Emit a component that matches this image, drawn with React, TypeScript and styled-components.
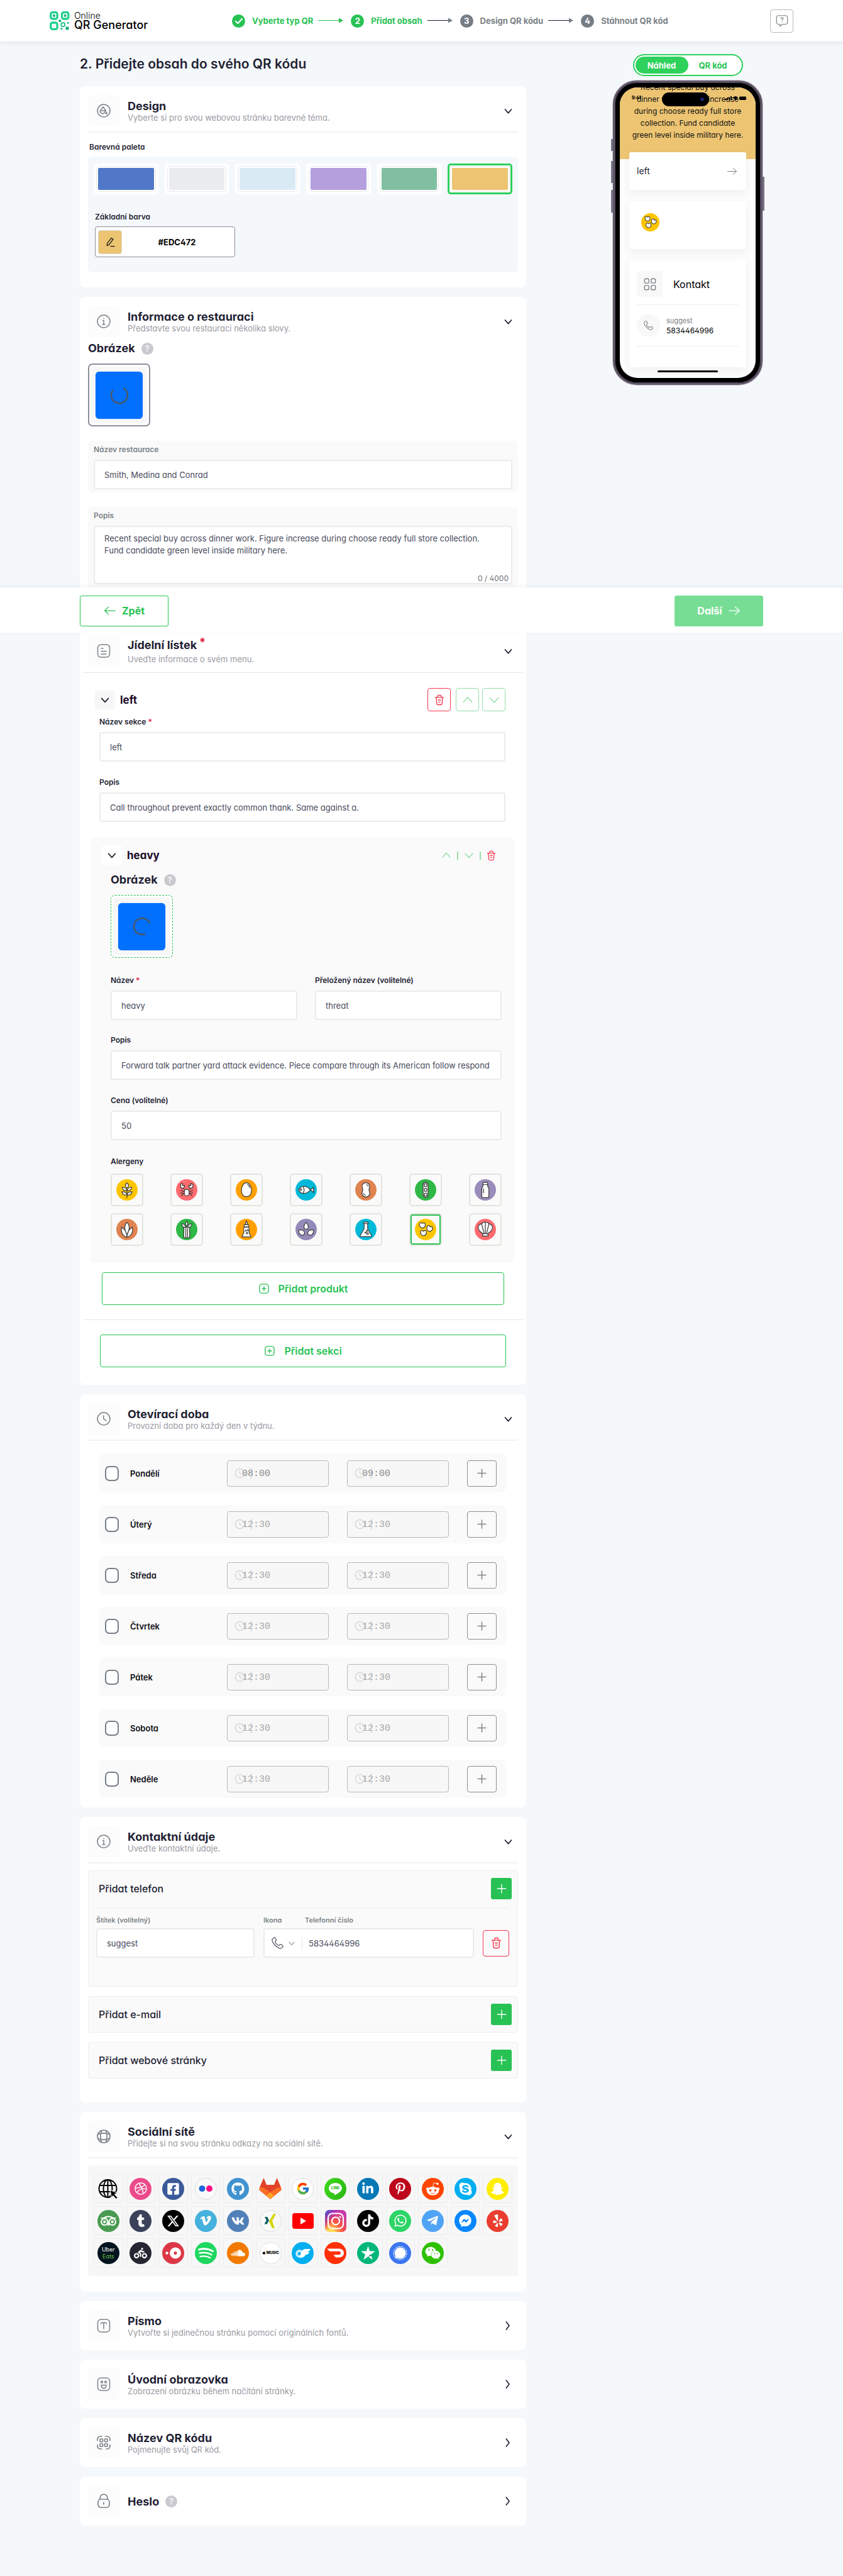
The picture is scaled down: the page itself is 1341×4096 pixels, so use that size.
import React from 'react';
import styled, { createGlobalStyle, css } from 'styled-components';
import {
  FaDribbble, FaFacebookSquare, FaGithub, FaLinkedinIn, FaPinterestP, FaRedditAlien, FaSkype,
  FaSnapchatGhost, FaTripadvisor, FaTumblr, FaVimeoV, FaVk, FaTiktok, FaWhatsapp,
  FaTelegramPlane, FaFacebookMessenger, FaYelp, FaSoundcloud, FaApple, FaWeixin, FaBiking,
} from 'react-icons/fa';
import { FaXTwitter } from 'react-icons/fa6';
import { FcGoogle } from 'react-icons/fc';

const c = {
  green: '#28c254',
  bright: '#2dd15b',
  ink: '#1f1f33',
  grey: '#7b8287',
  muted: '#9a9aa2',
  line: '#ededee',
  page: '#f4f8fb',
  soft: '#fafafa',
  red: '#f5384f',
};

const Global = createGlobalStyle`
  *, *::before, *::after { box-sizing: border-box; }
  body { margin: 0; background: ${c.page}; color: ${c.ink}; font-family: Inter, Lato, sans-serif; font-feature-settings: "cv11", "cv02"; font-size: 13px; line-height: 16px; }
  button, input, textarea { font: inherit; font-feature-settings: inherit; color: inherit; margin: 0; }
  button { cursor: pointer; padding: 0; border: 0; background: none; }
  h1, h2, h3, p { margin: 0; }
  svg { display: block; flex: none; }
`;

/* ---------- line icons ---------- */

type IconProps = { size?: number; color?: string; w?: number; children?: React.ReactNode };
const Line = ({ size = 24, color = c.grey, w = 1.5, children }: IconProps) => (
  <svg width={size} height={size} viewBox="0 0 24 24" fill="none" stroke={color} strokeWidth={w} strokeLinecap="round" strokeLinejoin="round" aria-hidden="true">
    {children}
  </svg>
);
const DownIcon = (p: IconProps) => <Line {...p}><path d="M4 8l8 9 8-9" /></Line>;
const UpIcon = (p: IconProps) => <Line {...p}><path d="M4 16l8-9 8 9" /></Line>;
const RightIcon = (p: IconProps) => <Line {...p}><path d="M8 3l7 9-7 9" /></Line>;
const PlusIcon = (p: IconProps) => <Line {...p}><path d="M12 3v18M3 12h18" /></Line>;
const ArrowRight = (p: IconProps) => <Line {...p}><path d="M2 12h20M14 5l8 7-8 7" /></Line>;
const ArrowLeft = (p: IconProps) => <Line {...p}><path d="M22 12H2M9 5l-7 7 7 7" /></Line>;
const ClockIcon = (p: IconProps) => <Line {...p}><circle cx="12" cy="12" r="10" /><path d="M11.8 7v5.2l4 2.6" /></Line>;
const InfoIcon = (p: IconProps) => <Line {...p}><circle cx="12" cy="12" r="10" /><path d="M10.5 10.5H12V17M10 17h4M12 7v.4" /></Line>;
const TrashIcon = (p: IconProps) => <Line {...p}><path d="M3 6.5h18M8.5 6V4c0-1 .5-2 1.5-2h4c1 0 1.5 1 1.5 2v2M5.5 7l.8 12.5c.1 1.5.8 2.5 2.5 2.5h6.4c1.7 0 2.4-1 2.5-2.5L18.5 7M9.5 12h5M10.5 16.5h3" /></Line>;
const PhoneIcon = (p: IconProps) => <Line {...p}><path d="M6.5 2.2c1.2 0 3.2 3.3 3.2 4.5 0 1.3-2 1.9-2 3.2 0 1.8 4.6 6.5 6.5 6.5 1.3 0 1.9-2 3.2-2 1.2 0 4.5 2.2 4.5 3.5 0 1.5-2.2 3.9-4.4 3.9C12 21.8 2.2 12 2.2 6.5c0-2.1 2.7-4.3 4.3-4.3z" /></Line>;
const GridIcon = (p: IconProps) => <Line {...p}><rect x="2.5" y="2.5" width="7.5" height="7.5" rx="2" /><rect x="14" y="2.5" width="7.5" height="7.5" rx="2" /><rect x="2.5" y="14" width="7.5" height="7.5" rx="2" /><rect x="14" y="14" width="7.5" height="7.5" rx="2" /></Line>;
const DesignIcon = () => <Line><circle cx="12" cy="12" r="10" /><path d="M11 6l-4.5 6c-.8 1.2-.5 2 .4 2.8l2.3 1.8c1 .7 2 .5 2.8-.3l3.5-4.3L11 6zM7 12h8M16.5 14.5c.8 1 1 1.7.2 2.4-.9.6-1.7-.2-1.4-1z" /></Line>;
const MenuIcon = () => <Line><rect x="2.5" y="2" width="19" height="20" rx="5" /><path d="M8 8h3M8 12.5h8M8 17h8" /></Line>;
const GlobeIcon = () => <Line w={1.7}><circle cx="12" cy="12" r="10" /><path d="M8.5 3c-2 5.5-2 12.5 0 18M15.5 3c2 5.5 2 12.5 0 18M3 8.5c5.5-2 12.5-2 18 0M3 15.5c5.5 2 12.5 2 18 0" /></Line>;
const FontIcon = () => <Line><rect x="2.5" y="2" width="19" height="20" rx="5" /><path d="M7.5 9c0-1.3.4-1.8 1.5-1.8h6c1.1 0 1.5.5 1.5 1.8M12 7.5V17" /></Line>;
const SmileIcon = () => <Line><rect x="2.5" y="2" width="19" height="20" rx="5" /><circle cx="9" cy="8.5" r="1.5" /><circle cx="15" cy="8.5" r="1.5" /><path d="M8 13.5h8c0 3-1.5 5-4 5s-4-2-4-5z" /></Line>;
const QrIcon = () => <Line w={1.7}><path d="M2 8.5V6.5C2 4 4 2 6.5 2H9M15 2h2.5C20 2 22 4 22 6.5v2M22 15.5v2c0 2.5-2 4.5-4.5 4.5H16M9 22H6.5C4 22 2 20 2 17.5v-2" /><rect x="6" y="6" width="4.5" height="4.5" rx="1" /><rect x="13.5" y="6" width="4.5" height="4.5" rx="1" /><rect x="6" y="13.5" width="4.5" height="4.5" rx="1" /><rect x="13.5" y="13.5" width="4.5" height="4.5" rx="1" /></Line>;
const LockIcon = () => <Line w={1.7}><rect x="3" y="9" width="18" height="13" rx="4.5" /><path d="M6 9V7c0-3.3 2.7-6 6-6s6 2.7 6 6v2M12 14v3" /></Line>;
const BoxPlusIcon = () => <Line size={18} color={c.green} w={1.8}><rect x="2.5" y="2.5" width="19" height="19" rx="5" /><path d="M8 12h8M12 8v8" /></Line>;
const PenIcon = () => <Line size={17} color="#111" w={1.7}><path d="M14.5 3.5l3.8 2.8-9.3 12.5-4.5 1.7.4-4.8zM13 22h8" /></Line>;
const ChatIcon = () => <Line size={22} w={1.3}><path d="M6 3h12c2 0 3.5 1.5 3.5 3.5v8c0 2-1.5 3.5-3.5 3.5h-5l-4.5 3.5V18H6c-2 0-3.5-1.5-3.5-3.5v-8C2.5 4.5 4 3 6 3z" /><path d="M10 8.3c.2-2.6 4.2-2.3 4 .1-.1 1.4-2 1.5-2 3M12 14.3v.2" /></Line>;

/* ---------- header ---------- */

const Header = styled.header`
  display: flex;
  align-items: center;
  height: 67px;
  padding: 0 79px;
  background: #fff;
  border-bottom: 1px solid #e6e6e6;
  box-shadow: 0 2px 8px rgba(0, 0, 0, 0.06);
`;
const Brand = styled.a`
  display: flex;
  align-items: center;
  gap: 7px;
  flex: 0 0 290px;
  color: #000;
  text-decoration: none;
`;
const BrandText = styled.span`
  display: flex;
  flex-direction: column;
  font-size: 18px;
  line-height: 16px;
  font-weight: 500;
`;
const BrandTop = styled.span`
  font-size: 14px;
  line-height: 14px;
  font-weight: 300;
`;
const Steps = styled.ol`
  display: flex;
  align-items: center;
  margin: 0;
  padding: 0;
  list-style: none;
`;
const Step = styled.li<{ $on?: boolean }>`
  display: flex;
  align-items: center;
  gap: 11px;
  font-size: 13px;
  font-weight: 700;
  white-space: nowrap;
  color: ${(p) => (p.$on ? c.green : c.grey)};
`;
const StepDot = styled.span<{ $on?: boolean }>`
  display: grid;
  place-items: center;
  width: 21px;
  height: 21px;
  border-radius: 50%;
  color: #fff;
  font-size: 13px;
  background: ${(p) => (p.$on ? c.green : '#757d85')};
`;
const StepArrow = styled.svg`
  margin: 0 12px 0 8px;
`;
const HelpButton = styled.button`
  display: grid;
  place-items: center;
  width: 37px;
  height: 37px;
  margin-left: auto;
  border: 1px solid #b5b8bb;
  border-radius: 4px;
`;

const Logo = () => (
  <svg width="32" height="30" viewBox="0 0 34 32" aria-hidden="true">
    <g fill="none" stroke="#1fd08a" strokeWidth="3.5">
      <rect x="1.8" y="1.8" width="11" height="11" rx="3" />
      <rect x="20.8" y="1.8" width="11" height="11" rx="3" />
      <rect x="1.8" y="19.2" width="11" height="11" rx="3" />
    </g>
    <g fill="#18b083">
      <rect x="5.3" y="5.3" width="4" height="4" rx="1" />
      <rect x="24.3" y="5.3" width="4" height="4" rx="1" />
      <rect x="15" y="14" width="4.5" height="4" rx="1.5" />
      <rect x="29.5" y="18" width="3" height="3" rx="1" />
      <rect x="27" y="26" width="5.5" height="5.5" rx="1.5" />
      <rect x="18.5" y="28" width="3" height="3" rx="1" />
    </g>
    <rect x="19.5" y="19.5" width="6" height="6" rx="2" fill="none" stroke="#1fc088" strokeWidth="2" />
  </svg>
);
const Arrow = ({ line, head }: { line: string; head: string }) => (
  <StepArrow width="40" height="10" viewBox="0 0 40 10" aria-hidden="true">
    <path d="M0 4.5h34" stroke={line} />
    <path d="M33 .5l7 4-7 4z" fill={head} />
  </StepArrow>
);

/* ---------- layout ---------- */

const Page = styled.div`
  position: relative;
  min-height: 100vh;
  padding-bottom: 80px;
`;
const Main = styled.main`
  display: flex;
  justify-content: space-between;
  align-items: flex-start;
  gap: 40px;
  max-width: 1342px;
  margin: 0 auto;
  padding: 19px 127px 0;
`;
const Content = styled.div`
  display: flex;
  flex-direction: column;
  gap: 15px;
  flex: 0 1 710px;
  min-width: 0;
`;
const PageTitle = styled.h1`
  margin-bottom: 5px;
  font-size: 21px;
  line-height: 31px;
  font-weight: 600;
`;
const Card = styled.section<{ $bottom?: number }>`
  padding: 14px 13px ${(p) => p.$bottom ?? 14}px;
  background: #fff;
  border-radius: 8px;
`;
const CardHead = styled.div<{ $rule?: boolean; $flush?: boolean }>`
  display: flex;
  align-items: center;
  gap: 13px;
  padding-right: 8px;
  ${(p) => p.$rule && css`
    padding-bottom: 8px;
    border-bottom: 2px solid #f2f2f3;
  `}
  ${(p) => p.$flush && css`
    margin: 0 -8px;
    padding: 0 16px 9px 8px;
    border-bottom: 1px solid #e8e8ea;
  `}
`;
const HeadIcon = styled.span`
  display: grid;
  place-items: center;
  flex: none;
  width: 50px;
  height: 50px;
  background: #fcfcfc;
  border-radius: 6px;
`;
const HeadText = styled.div`
  flex: 1;
  min-width: 0;
`;
const CardTitle = styled.h2`
  display: flex;
  align-items: center;
  gap: 10px;
  font-size: 18px;
  line-height: 21px;
  font-weight: 700;
`;
const CardNote = styled.p<{ $low?: boolean }>`
  padding-top: ${(p) => (p.$low ? 4 : 0)}px;
  font-size: 13px;
  line-height: 16px;
  color: ${c.muted};
`;
const Star = styled.span<{ $big?: boolean }>`
  color: #e5203c;
  ${(p) => p.$big && css`
    margin: -10px 0 0 -6px;
    font-size: 18px;
    line-height: 21px;
  `}
`;
const HelpDot = styled.button`
  display: grid;
  place-items: center;
  width: 19px;
  height: 19px;
  border-radius: 50%;
  background: #cbc9cf;
  color: #fff;
  font-size: 13px;
  font-weight: 500;
  line-height: 19px;
`;

type HeadProps = { icon: React.ReactNode; title: React.ReactNode; note?: string; closed?: boolean; rule?: boolean; flush?: boolean };
const Head = ({ icon, title, note, closed, rule, flush }: HeadProps) => (
  <CardHead $rule={rule} $flush={flush}>
    <HeadIcon>{icon}</HeadIcon>
    <HeadText>
      <CardTitle>{title}</CardTitle>
      {note && <CardNote $low={flush}>{note}</CardNote>}
    </HeadText>
    <button type="button" aria-label={closed ? 'Rozbalit' : 'Sbalit'}>
      {closed ? <RightIcon size={16} color={c.ink} w={2.5} /> : <DownIcon size={15} color={c.ink} w={2.8} />}
    </button>
  </CardHead>
);

/* ---------- design ---------- */

const Caption = styled.h3<{ $top?: number }>`
  padding: ${(p) => p.$top ?? 0}px 2px 7px;
  font-size: 12px;
  line-height: 16px;
  font-weight: 600;
`;
const PalettePanel = styled.div`
  padding: 11px 9px 24px;
  background: ${c.page};
  border-radius: 6px;
`;
const Swatches = styled.div`
  display: grid;
  grid-template-columns: repeat(6, 1fr);
  gap: 10px;
  margin-bottom: 28px;
`;
const Swatch = styled.button<{ $color: string; $on?: boolean }>`
  height: 49px;
  padding: 4px;
  background: #fff;
  border: 3px solid ${(p) => (p.$on ? c.bright : '#fff')};
  border-radius: 5px;
  &::before {
    content: '';
    display: block;
    height: 100%;
    background: ${(p) => p.$color};
    border-radius: 2px;
    box-shadow: 0 0 0 2px #fff, 0 0 0 3px #e9e9ec;
  }
`;
const ColorButton = styled.button`
  display: flex;
  align-items: center;
  width: 223px;
  height: 49px;
  margin-left: 2px;
  padding: 0 4px;
  background: #fff;
  border: 1px solid #8f8d98;
  border-radius: 4px;
  font-size: 13px;
  font-weight: 700;
  color: #000;
`;
const ColorChip = styled.span`
  display: grid;
  place-items: center;
  width: 38px;
  height: 38px;
  background: #ecc472;
  border: 1px solid #d6d6d6;
  border-radius: 4px;
`;
const ColorCode = styled.span`
  flex: 1;
  text-align: center;
`;

/* ---------- image slot ---------- */

const ImageLabel = styled.h3`
  display: flex;
  align-items: center;
  gap: 10px;
  margin-bottom: 13px;
  font-size: 18px;
  line-height: 22px;
  font-weight: 700;
`;
const ImageBlock = styled.div`
  padding-top: 7px;
`;
const ImageSlot = styled.button<{ $dashed?: boolean }>`
  display: grid;
  place-items: center;
  width: 99px;
  height: 100px;
  padding: 3px;
  border: ${(p) => (p.$dashed ? `1px dashed ${c.green}` : '2px solid #8f8d98')};
  border-radius: 7px;
  background: linear-gradient(#f7f7f7, #f7f7f7) content-box, #fff;
`;
const ImageFill = styled.span`
  display: grid;
  place-items: center;
  width: 75px;
  height: 75px;
  background: #0170ff;
  border-radius: 6px;
  box-shadow: 0 0 1px #0170ff;
`;
const Picture = ({ dashed }: { dashed?: boolean }) => (
  <ImageSlot type="button" $dashed={dashed} aria-label="Obrázek">
    <ImageFill>
      <svg width="30" height="30" viewBox="0 0 30 30" fill="none" stroke="#4b5763" strokeWidth="2.5">
        <path d={dashed ? 'M27 10A13 13 0 1 0 20.5 26.8' : 'M4.5 7.5A13 13 0 1 0 21.5 4'} />
      </svg>
    </ImageFill>
  </ImageSlot>
);

/* ---------- fields ---------- */

const FieldBox = styled.div<{ $soft?: boolean; $gap?: number }>`
  display: flex;
  flex-direction: column;
  gap: 8px;
  margin-top: ${(p) => p.$gap ?? 0}px;
  ${(p) => p.$soft && css`
    padding: 6px 9px 5px;
    background: ${c.soft};
    border-radius: 6px;
    color: ${c.grey};
  `}
`;
const Label = styled.label`
  font-size: 12px;
  line-height: 16px;
  font-weight: 600;
`;
const inputLook = css`
  width: 100%;
  background: #fff;
  border: 2px solid #ebebeb;
  border-radius: 4px;
  color: #474a5a;
  font-size: 13px;
  outline: none;
`;
const Input = styled.input`
  ${inputLook}
  height: 47px;
  padding: 0 15px;
`;
const Area = styled.textarea`
  ${inputLook}
  display: block;
  height: 93px;
  padding: 9px 24px 9px 15px;
  line-height: 19px;
  resize: none;
`;
const AreaWrap = styled.div`
  position: relative;
`;
const Counter = styled.span`
  position: absolute;
  right: 6px;
  bottom: 1px;
  color: #6f7378;
  font-size: 12px;
`;
type FieldProps = { id: string; label: string; value: string; required?: boolean; soft?: boolean; gap?: number };
const Field = ({ id, label, value, required, soft, gap }: FieldProps) => (
  <FieldBox $soft={soft} $gap={gap}>
    <Label htmlFor={id}>{label}{required && <Star> *</Star>}</Label>
    <Input id={id} defaultValue={value} />
  </FieldBox>
);

/* ---------- floating navigation ---------- */

const ActionBar = styled.nav`
  position: absolute;
  top: 934px;
  left: 0;
  right: 0;
  background: #fff;
  box-shadow: 0 -2px 8px rgba(0, 0, 0, 0.05);
`;
const ActionInner = styled.div`
  display: flex;
  justify-content: space-between;
  align-items: center;
  height: 72px;
  max-width: 1342px;
  margin: 0 auto;
  padding: 2px 127px 0;
`;
const ActionButton = styled.button<{ $solid?: boolean }>`
  display: flex;
  align-items: center;
  justify-content: center;
  gap: 9px;
  width: 141px;
  height: 49px;
  border: 1px solid ${(p) => (p.$solid ? '#77dd94' : c.green)};
  border-radius: 3px;
  background: ${(p) => (p.$solid ? '#77dd94' : '#fff')};
  color: ${(p) => (p.$solid ? '#fff' : c.green)};
  font-size: 16px;
  font-weight: 700;
`;

/* ---------- menu ---------- */

const MenuBody = styled.div`
  padding: 0 7px;
`;
const Row = styled.div<{ $gap?: number }>`
  display: flex;
  align-items: center;
  gap: ${(p) => p.$gap ?? 8}px;
`;
const SectionRow = styled(Row)`
  padding: 24px 13px 0 4px;
`;
const SectionFields = styled.div`
  padding: 9px 13px 25px 11px;
`;
const RowTitle = styled.h3`
  flex: 1;
  font-size: 17px;
  line-height: 20px;
  font-weight: 700;
  color: #1c0c28;
`;
const FoldButton = styled.button<{ $white?: boolean }>`
  display: grid;
  place-items: center;
  width: 32px;
  height: 30px;
  background: ${(p) => (p.$white ? '#fff' : '#f7f7f7')};
`;
const SquareButton = styled.button<{ $tone: 'red' | 'green' | 'grey'; $w?: number; $h?: number }>`
  display: grid;
  place-items: center;
  flex: none;
  width: ${(p) => p.$w ?? 37}px;
  height: ${(p) => p.$h ?? 37}px;
  border: 1px solid ${(p) => ({ red: c.red, green: '#95dfaa', grey: '#8e8e95' })[p.$tone]};
  border-radius: 4px;
`;
const Bar = styled.span`
  width: 2px;
  height: 13px;
  background: #95dfaa;
`;
const Product = styled.div`
  margin: 0 -1px 0 -3px;
  padding: 13px 20px 27px 18px;
  background: ${c.soft};
  border-radius: 5px;
`;
const ProductTools = styled(Row)`
  margin-right: 8px;
`;
const ProductBody = styled.div`
  padding: 13px 0 0 14px;
`;
const TwoCols = styled.div`
  display: grid;
  grid-template-columns: 1fr 1fr;
  gap: 28px;
  margin: 28px 0 0;
`;
const AllergenTitle = styled.h3`
  margin-top: 26px;
  font-size: 12px;
  line-height: 16px;
  font-weight: 600;
`;
const Allergens = styled.div`
  display: grid;
  grid-template-columns: repeat(7, 52px);
  justify-content: space-between;
  row-gap: 11px;
  margin-top: 11px;
`;
const AllergenTile = styled.button<{ $on?: boolean }>`
  display: grid;
  place-items: center;
  height: 52px;
  border: 2px solid #e4e4dd;
  border-radius: 5px;
  ${(p) => p.$on && css`
    box-shadow: inset 0 0 0 2px ${c.green};
  `}
`;
const WideButton = styled.button<{ $inset?: number }>`
  display: flex;
  align-items: center;
  justify-content: center;
  gap: 14px;
  width: calc(100% - ${(p) => (p.$inset ?? 12) * 2}px);
  height: 52px;
  margin: 15px auto 0;
  border: 1px solid ${c.green};
  border-radius: 4px;
  color: ${c.green};
  font-size: 16px;
  font-weight: 600;
`;
const Rule = styled.hr`
  height: 1px;
  margin: 23px -8px;
  border: 0;
  background: #e8e8ea;
`;

const bean = 'M-5-2c0-3 3-4 4-2.5 1 1.3 1.5 1 2.5 0C3-5.5 5-4 5-1.5 5 2 2.5 4 0 4s-5-2.5-5-6z';
const BeanArt = () => (
  <>
    <path d={bean} transform="translate(12.5 11.5)" />
    <path d={bean} transform="translate(24.5 17) rotate(20)" />
    <path d={bean} transform="translate(14.5 24.5) rotate(-5)" />
  </>
);
const allergens: { name: string; color: string; art: React.ReactNode; on?: boolean }[] = [
  { name: 'Lepek', color: '#fdc500', art: <><path d="M18 31V17" /><path d="M18 6c-3.5 3-3.5 6 0 9 3.5-3 3.5-6 0-9zM10 13.5c5 0 7 1.500 8 5.500-4 1-7.500-1-8-5.500zM26 13.500c-5 0-7 1.500-8 5.500 4 1 7.500-1 8-5.500zM9.500 21c5 0 7.500 1 8.500 5-4 1.500-8 0-8.500-5zM26.500 21c-5 0-7.500 1-8.500 5 4 1.500 8 0 8.500-5z" /></> },
  { name: 'Korýši', color: '#ff6b6f', art: <><path d="M9 28l4-4-5-1M27 28l-4-4 5-1M8 19l6 2M28 19l-6 2M14 17l-4-3M22 17l4-3" fill="none" /><rect x="14" y="17" width="8" height="11" rx="4" /><path d="M11 7c-4 0-5 7-1 8 3 .5 5-2 4.5-4.5L11 11zM25 7c4 0 5 7 1 8-3 .5-5-2-4.5-4.5L25 11z" /></> },
  { name: 'Vejce', color: '#ffa000', art: <><path d="M18 6c-5 0-8.5 7-8.5 13S13 29.5 18 29.5s8.5-4.5 8.5-10.5S23 6 18 6z" /><path d="M20 9c2 1 3 3 3.5 5" /></> },
  { name: 'Ryby', color: '#00b9d8', art: <><path d="M5 18c4-8 14-8 20 0-6 8-16 8-20 0zM25 18l6-4.5c-1 3-1 6 0 9z" /><path d="M13 12.5c2 3.5 2 7.5 0 11" /><circle cx="9" cy="17.5" r="1.5" /></> },
  { name: 'Arašídy', color: '#df8350', art: <><path d="M18 6c-5 0-7.5 4-6 8 1 2.5 1 4.5 0 7-2 4.5 1 9 6 9s8-4.5 6-9c-1-2.5-1-4.5 0-7 1.500-4-1-8-6-8z" /><path d="M19 9c2 .5 2.5 1.5 3 2.5M14 24c.5 1.5 1.5 2.5 3 3" /></> },
  { name: 'Sója', color: '#2fb847', art: <><path d="M18 5c-5 1-5 6-4 9-1 3-1 5 0 8-1 4 0 8 4 9 4-1 5-5 4-9 1-3 1-5 0-8 1-3 1-8-4-9z" /><circle cx="18" cy="10" r="2.5" /><circle cx="18" cy="18" r="2.5" /><circle cx="18" cy="26" r="2.5" /></> },
  { name: 'Mléko', color: '#9a8cba', art: <><path d="M14 9h8v3l2 3v14c0 1-1 2-2 2h-8c-1 0-2-1-2-2V15l2-3z" /><rect x="14" y="5.5" width="8" height="3.5" rx="1" /><path d="M15 16v7" /></> },
  { name: 'Kukuřice', color: '#df8350', art: <><path d="M18 6c-5 4-5 14 0 22 5-8 5-18 0-22z" /><path d="M9 14c-2 9 2 15 9 17 0-7-3-13-9-17zM27 14c2 9-2 15-9 17 0-7 3-13 9-17z" /></> },
  { name: 'Celer', color: '#2fb847', art: <><path d="M18 4c-3 3-2 6 0 9 2-3 3-6 0-9zM9.500 8c0 4 2 6.5 6.5 7 0-4-2-6.5-6.5-7zM26.5 8c0 4-2 6.5-6.5 7 0-4 2-6.5 6.5-7z" /><path d="M13 15c1 5-1 12 .5 17h9c1.5-5-.5-12 .5-17l-5-1z" /><path d="M16.5 16v15M19.5 16v15" /></> },
  { name: 'Hořčice', color: '#ffa000', art: <><path d="M16 10l1.5-6h1L20 10z" /><rect x="14" y="10" width="8" height="3.5" rx="1" /><path d="M14.5 14h7c3 4 0 6 1 9l3 7.5H10.5L13.5 23c1-3-2-5 1-9z" /><circle cx="19" cy="24" r="1.2" /><circle cx="17" cy="20" r=".8" /><circle cx="20.5" cy="19" r="1" /></> },
  { name: 'Sezam', color: '#948ab8', art: <><path d="M18 6c-5 5-5 11 0 11.5C23 17 23 11 18 6zM5.5 19c7-1.5 11 2 9.5 7-4 4-10 0-9.5-7zM30.5 19c-7-1.5-11 2-9.5 7 4 4 10 0 9.5-7z" /></> },
  { name: 'Siřičitany', color: '#00b9d8', art: <><path d="M15 7h6v10l6.5 11c.5 1 0 2-1 2h-17c-1 0-1.5-1-1-2L15 17z" /><rect x="14" y="5.5" width="8" height="2.5" rx="1" /><circle cx="21" cy="25" r="1.5" /><circle cx="17.5" cy="23" r="1" /><circle cx="20" cy="20" r="1" /></> },
  { name: 'Vlčí bob', color: '#fdc500', on: true, art: <BeanArt /> },
  { name: 'Měkkýši', color: '#ff6b6f', art: <><path d="M14 25C7 21 4 15 7 11c2-3 5-2 6-4 3-2 7-2 10 0 1 2 4 1 6 4 3 4 0 10-7 14z" /><path d="M16 25L12 9M20 25l4-16M18 25V6M14 25h8l1 4H13z" /></> },
];
const AllergenIcon = ({ color, art, size = 34 }: { color: string; art: React.ReactNode; size?: number }) => (
  <svg width={size} height={size} viewBox="0 0 36 36" aria-hidden="true">
    <circle cx="18" cy="18" r="18" fill={color} />
    <g fill="#fff" stroke="#3a3a3a" strokeWidth="1.3" strokeLinecap="round" strokeLinejoin="round">{art}</g>
  </svg>
);

/* ---------- opening hours ---------- */

const Days = styled.div`
  display: flex;
  flex-direction: column;
  gap: 20px;
  padding: 21px 19px 0 18px;
`;
const Day = styled.div`
  display: flex;
  align-items: center;
  height: 61px;
  padding: 0 15px 0 9px;
  background: ${c.soft};
  border-radius: 8px;
`;
const DayLabel = styled.label`
  display: flex;
  align-items: center;
  flex: 1;
  gap: 18px;
  font-size: 13px;
  font-weight: 600;
  color: #0c0c14;
`;
const Check = styled.input`
  appearance: none;
  width: 22px;
  height: 24px;
  margin: 0;
  border: 2px solid #767e87;
  border-radius: 7px;
  background: #fff;
`;
const TimeField = styled.span`
  position: relative;
  width: 162px;
  margin-right: 29px;
`;
const TimeInput = styled.input<{ $set?: boolean }>`
  width: 100%;
  height: 42px;
  padding: 2px 10px 0 23px;
  background: #f7f7f7;
  border: 1px solid #b9b9bb;
  border-radius: 4px;
  color: ${(p) => (p.$set ? '#8b8b8b' : '#a8a8a8')};
  font-family: "Liberation Mono", monospace;
  font-size: 15px;
`;
const TimeIcon = styled.span`
  position: absolute;
  top: 12px;
  left: 12px;
  display: flex;
  padding-right: 9px;
  border-right: 1px solid #c9cbcd;
`;
const Time = ({ label, value, set }: { label: string; value: string; set?: boolean }) => (
  <TimeField>
    <TimeInput aria-label={label} defaultValue={value} $set={set} />
    <TimeIcon><ClockIcon size={17} color="#c9cbcd" /></TimeIcon>
  </TimeField>
);

/* ---------- contacts ---------- */

const Panels = styled.div`
  display: flex;
  flex-direction: column;
  gap: 15px;
  padding-top: 11px;
`;
const Panel = styled.div`
  border: 1px solid ${c.line};
  border-radius: 4px;
  background: ${c.soft};
`;
const PanelHead = styled.div`
  display: flex;
  align-items: center;
  justify-content: space-between;
  height: 56px;
  padding: 0 9px 0 16px;
  font-size: 16px;
  font-weight: 500;
`;
const AddButton = styled.button`
  display: grid;
  place-items: center;
  width: 33px;
  height: 34px;
  background: ${c.green};
  border-radius: 3px;
`;
const PhoneForm = styled.div`
  display: grid;
  grid-template-columns: 252px 1fr 42px;
  align-items: center;
  column-gap: 14px;
  row-gap: 5px;
  margin: 2px 13px 0 12px;
  padding: 11px 0 45px;
  border-top: 1px solid ${c.line};
`;
const SmallLabel = styled.label`
  font-size: 11px;
  line-height: 16px;
  font-weight: 600;
  color: ${c.grey};
`;
const SplitLabels = styled.div`
  display: grid;
  grid-template-columns: 66px 1fr;
  grid-column: 2 / 4;
`;
const PhoneBox = styled.div`
  ${inputLook}
  display: flex;
  align-items: center;
  height: 47px;
  padding: 0 10px;
`;
const IconPick = styled.button`
  display: flex;
  align-items: center;
  gap: 6px;
  height: 20px;
  padding-right: 10px;
  margin-right: 10px;
  border-right: 1px solid #e2e2e2;
`;
const PhoneInput = styled.input`
  flex: 1;
  min-width: 0;
  padding: 0;
  border: 0;
  outline: 0;
  color: #474a5a;
`;

/* ---------- social ---------- */

const SocialPanel = styled.div`
  display: grid;
  grid-template-columns: repeat(13, 1fr);
  gap: 5px;
  margin-top: 11px;
  padding: 14px 9px;
  background: #f7f7f7;
  border-radius: 5px;
`;
const SocialTile = styled.button`
  display: grid;
  place-items: center;
  height: 46px;
  border: 1px solid #ededed;
  border-radius: 4px;
`;
const Badge = styled.span<{ $bg: string; $ring?: boolean }>`
  display: flex;
  flex-direction: column;
  align-items: center;
  justify-content: center;
  width: 35px;
  height: 35px;
  border-radius: 50%;
  background: ${(p) => p.$bg};
  border: ${(p) => (p.$ring ? '1px solid #dcdcdc' : '0')};
  color: #fff;
`;
const UberText = styled.span<{ $green?: boolean }>`
  font-size: 9px;
  line-height: 11px;
  color: ${(p) => (p.$green ? '#69bf3f' : '#fff')};
`;
const MusicText = styled.span`
  display: flex;
  align-items: center;
  gap: 1px;
  color: #000;
  font-size: 6px;
  line-height: 8px;
  font-weight: 800;
`;
const LineText = styled.span`
  position: absolute;
  font-size: 6px;
  line-height: 8px;
  font-weight: 800;
  color: #2cbf13;
  padding-bottom: 2px;
`;

const WebArt = () => (
  <svg width="32" height="33" viewBox="0 0 32 33" fill="none" stroke="#000" strokeWidth="2">
    <circle cx="15.5" cy="16" r="14" />
    <ellipse cx="15.5" cy="16" rx="7" ry="14" />
    <path d="M15.5 2v28M3 11h25M3 21h25" />
    <path d="M19 18l12 5-4.5 2 5 5.5-2.5 2.5-5.5-5.5-2 4z" fill="#000" stroke="#f7f7f7" strokeWidth="1.2" />
  </svg>
);
const GitlabArt = () => (
  <svg width="36" height="34" viewBox="0 0 36 34">
    <path d="M7.5 0L12 11h12l4.5-11L35 15 18 34 1 15z" fill="#e24329" />
    <path d="M1 15l-1 4 18 15 6-7L7 15.500zM35 15l1 4-18 15-6-7 17-11.500z" fill="#fc6d26" />
    <path d="M18 23l-6 4.500 6 6.500 6-6.500z" fill="#fca326" />
  </svg>
);
const YoutubeArt = () => (
  <svg width="34" height="25" viewBox="0 0 34 25"><rect width="34" height="25" rx="4" fill="#f00" /><path d="M13 7l9 5.5-9 5.5z" fill="#fff" /></svg>
);
const InstagramArt = () => (
  <svg width="34" height="35" viewBox="0 0 34 35">
    <defs>
      <radialGradient id="ig" cx=".27" cy="1.05" r="1.05"><stop offset="0" stopColor="#fd5" /><stop offset=".15" stopColor="#fd5" /><stop offset=".5" stopColor="#ff543e" /><stop offset="1" stopColor="#c837ab" /></radialGradient>
      <linearGradient id="ig2" x1="0" y1="0" x2=".45" y2=".35"><stop offset="0" stopColor="#3771c8" /><stop offset="1" stopColor="#60f" stopOpacity="0" /></linearGradient>
    </defs>
    <rect width="34" height="35" rx="7" fill="url(#ig)" /><rect width="34" height="35" rx="7" fill="url(#ig2)" />
    <g fill="none" stroke="#fff" strokeWidth="2.2"><rect x="5" y="5.5" width="24" height="24" rx="7" /><circle cx="17" cy="17.5" r="6" /></g>
    <circle cx="24" cy="11" r="1.5" fill="#fff" />
  </svg>
);
const Art = ({ children }: { children: React.ReactNode }) => (
  <svg width="35" height="35" viewBox="0 0 35 35">{children}</svg>
);

const socials: [string, string | null, React.ReactNode, boolean?][] = [
  ['Web', null, <WebArt />],
  ['Dribbble', '#ec4b8b', <FaDribbble size={20} />],
  ['Facebook', '#3b5a99', <FaFacebookSquare size={21} />],
  ['Flickr', '#f9f9f9', <Art><circle cx="11.5" cy="17" r="5" fill="#1d66dc" /><circle cx="23" cy="17" r="5" fill="#ff0a84" /></Art>, true],
  ['GitHub', '#4093d0', <FaGithub size={21} />],
  ['GitLab', null, <GitlabArt />],
  ['Google', '#fff', <FcGoogle size={22} />, true],
  ['LINE', 'linear-gradient(120deg, #3ddb1e, #2bb511)', <><Art><path d="M17.5 8c-6 0-10.5 3.7-10.5 8.5 0 4 3.5 7.3 8.5 8 1 .2.5 1.5.5 3 4-2 12-6 12-11C28 11.7 23.5 8 17.5 8z" fill="#fff" /></Art><LineText>LINE</LineText></>],
  ['LinkedIn', '#0578b6', <FaLinkedinIn size={20} />],
  ['Pinterest', '#bd081b', <FaPinterestP size={20} />],
  ['Reddit', '#ff4500', <FaRedditAlien size={23} />],
  ['Skype', '#00aff0', <FaSkype size={23} />],
  ['Snapchat', '#ffee00', <FaSnapchatGhost size={21} />],
  ['Tripadvisor', '#4a9b52', <FaTripadvisor size={25} />],
  ['Tumblr', '#3b4159', <FaTumblr size={20} />],
  ['X', '#000', <FaXTwitter size={21} />],
  ['Vimeo', '#45b1dc', <FaVimeoV size={20} />],
  ['VK', '#5180b8', <FaVk size={21} />],
  ['Xing', '#f9f9f9', <Art><path d="M8 11h4l3 5.5-3.5 6H7.5l3.5-6z" fill="#005a5f" /><path d="M22 6h4l-6 11.5L24 29h-4l-5-11z" fill="#d4d600" /></Art>, true],
  ['YouTube', null, <YoutubeArt />],
  ['Instagram', null, <InstagramArt />],
  ['TikTok', '#000', <FaTiktok size={20} />],
  ['WhatsApp', '#2cd566', <FaWhatsapp size={22} />],
  ['Telegram', '#50a4f5', <FaTelegramPlane size={20} />],
  ['Messenger', '#0a86ff', <FaFacebookMessenger size={20} />],
  ['Yelp', '#ea3d2f', <FaYelp size={20} />],
  ['Uber Eats', '#03141f', <><UberText>Uber</UberText><UberText $green>Eats</UberText></>],
  ['Postmates', '#242731', <FaBiking size={21} />],
  ['OpenTable', '#dc3746', <Art><circle cx="21" cy="17.5" r="9" fill="#fff" /><circle cx="21" cy="17.5" r="2.5" fill="#dc3746" /><circle cx="7.5" cy="17.5" r="2.2" fill="#fff" /></Art>],
  ['Spotify', '#1ed75f', <Art><g fill="none" stroke="#fff" strokeLinecap="round"><path d="M6.5 12c7-2 15-1.2 22 2.5" strokeWidth="3" /><path d="M7.5 17.5c6.5-1.5 13-.8 19 2.5" strokeWidth="2.5" /><path d="M8.5 23c5.5-1.2 11-.5 16 2" strokeWidth="2.2" /></g></Art>],
  ['SoundCloud', '#f27a00', <FaSoundcloud size={23} />],
  ['Apple Music', '#fff', <MusicText><FaApple size={6} />MUSIC</MusicText>, true],
  ['OnlyFans', '#00aff0', <Art><circle cx="12.5" cy="18.5" r="4.5" fill="none" stroke="#bfebfc" strokeWidth="3.8" /><path d="M13 25c1-8 3-14 10-14h7c-1 3-3 4-6 4.5l4 .2c-1 3-3 4.3-6 4.5-1.5 3-4.5 5-9 4.8z" fill="#fff" /></Art>],
  ['DoorDash', '#ff3008', <Art><path d="M4 10.5h19c5 0 8 3 8 7s-3 7-8 7h-5l-3.5-4.2H23c1.5 0 3-1 3-2.8s-1.5-2.8-3-2.8H8.5z" fill="#fff" /></Art>],
  ['Trustpilot', '#03b67a', <Art><path d="M17.5 6l2.7 8.5H29l-7 5.2 2.7 8.5-7.2-5.2-7.2 5.2 2.7-8.5-7-5.2h8.8z" fill="#fff" /><path d="M22 19.7l.8 2.3-5.3 1z" fill="#046b48" /></Art>],
  ['Signal', '#3b76f0', <Art><path d="M17.5 8.5a9 9 0 1 1-4.5 16.8L9.5 26l.8-3.500a9 9 0 0 1 7.200-14z" fill="#fff" /><circle cx="17.5" cy="17.5" r="10.5" fill="none" stroke="#fff" strokeWidth="1" strokeDasharray="4 1" /></Art>],
  ['WeChat', '#2dc100', <FaWeixin size={25} />],
];

/* ---------- phone preview ---------- */

const Preview = styled.aside`
  display: flex;
  flex-direction: column;
  align-items: center;
  gap: 7px;
  flex: 0 0 240px;
`;
const Toggle = styled.div`
  display: grid;
  grid-template-columns: 84px 79px;
  height: 35px;
  width: 175px;
  padding: 2px;
  border: 2px solid ${c.bright};
  border-radius: 18px;
  background: #fff;
`;
const ToggleButton = styled.button<{ $on?: boolean }>`
  border-radius: 14px;
  background: ${(p) => (p.$on ? c.bright : 'transparent')};
  color: ${(p) => (p.$on ? '#fff' : c.green)};
  font-size: 13px;
  font-weight: 700;
`;
const Phone = styled.div`
  position: relative;
  width: 238px;
  height: 484px;
  padding: 8px;
  border: 3px solid #61586a;
  border-radius: 38px;
  background: #000;
  box-shadow: inset 0 0 0 1px #4c4455, 0 0 0 1px #cfccd3;
`;
const SideKey = styled.span<{ $side: 'left' | 'right'; $top: number; $h: number }>`
  position: absolute;
  ${(p) => p.$side}: -6px;
  top: ${(p) => p.$top}px;
  width: 3px;
  height: ${(p) => p.$h}px;
  background: #7a7186;
`;
const Screen = styled.div`
  position: relative;
  height: 100%;
  overflow: hidden;
  background: #fcfcfc;
  border-radius: 28px;
`;
const Hero = styled.div`
  display: flex;
  align-items: flex-end;
  height: 114px;
  padding: 0 16px 29px;
  background: #ecc472;
  color: #111;
  font-size: 12px;
  line-height: 19px;
  text-align: center;
`;
const Island = styled.span`
  position: absolute;
  top: 8px;
  left: 67px;
  width: 75px;
  height: 22px;
  border-radius: 11px;
  background: radial-gradient(circle at 64px 11px, #1d2a80 0 2px, #050510 3px, #000 5px);
`;
const Status = styled.div`
  position: absolute;
  top: 9px;
  left: 19px;
  right: 15px;
  display: flex;
  justify-content: space-between;
  align-items: center;
  font-size: 7px;
  font-weight: 800;
  color: #000;
`;
const PhoneCards = styled.div`
  display: flex;
  flex-direction: column;
  gap: 18px;
  margin: -11px 15px 0;
`;
const PhoneCard = styled.div<{ $pad: string; $h: number }>`
  position: relative;
  height: ${(p) => p.$h}px;
  padding: ${(p) => p.$pad};
  background: #fff;
  border-radius: 3px;
  box-shadow: 0 5px 14px rgba(0, 0, 0, 0.05);
`;
const PhoneLink = styled.a`
  display: flex;
  align-items: center;
  justify-content: space-between;
  height: 100%;
  color: ${c.ink};
  text-decoration: none;
  font-size: 14px;
`;
const ContactHead = styled.div`
  display: flex;
  align-items: center;
  gap: 17px;
  padding-bottom: 12px;
  border-bottom: 1px solid #ededee;
  font-size: 16px;
  color: #000;
`;
const ContactRow = styled.div`
  display: flex;
  align-items: center;
  gap: 10px;
  padding: 14px 0;
  border-bottom: 1px solid #ededee;
  font-size: 12px;
  line-height: 16px;
  color: #000;
`;
const IconPlate = styled.span<{ $round?: boolean }>`
  display: grid;
  place-items: center;
  width: ${(p) => (p.$round ? 37 : 41)}px;
  height: ${(p) => (p.$round ? 37 : 41)}px;
  background: #f8f8f8;
  border-radius: ${(p) => (p.$round ? '50%' : '4px')};
`;
const ContactText = styled.span`
  display: flex;
  flex-direction: column;
`;
const ContactTag = styled.span`
  font-size: 11px;
  color: ${c.grey};
`;
const HomeBar = styled.span`
  position: absolute;
  left: 60px;
  right: 60px;
  bottom: 9px;
  height: 3px;
  border-radius: 2px;
  background: #000;
`;

const palette = ['#5178c8', '#ebecf0', '#daeaf5', '#b59fdd', '#80c0a0', '#ecc472'];
const days = ['Pondělí', 'Úterý', 'Středa', 'Čtvrtek', 'Pátek', 'Sobota', 'Neděle'];

export default function App() {
  return (
    <Page>
      <Global />
      <Header>
        <Brand href="#" aria-label="Online QR Generator">
          <Logo />
          <BrandText><BrandTop>Online</BrandTop>QR Generator</BrandText>
        </Brand>
        <Steps>
          <Step $on>
            <StepDot $on>
              <svg width="14" height="11" viewBox="0 0 14 11" fill="none" stroke="#fff" strokeWidth="2.2" strokeLinecap="round" strokeLinejoin="round"><path d="M2 6l3.5 3L12 2" /></svg>
            </StepDot>
            Vyberte typ QR
          </Step>
          <Arrow line={c.green} head={c.green} />
          <Step $on><StepDot $on>2</StepDot>Přidat obsah</Step>
          <Arrow line={c.ink} head="#757d85" />
          <Step><StepDot>3</StepDot>Design QR kódu</Step>
          <Arrow line={c.ink} head="#757d85" />
          <Step><StepDot>4</StepDot>Stáhnout QR kód</Step>
        </Steps>
        <HelpButton type="button" aria-label="Nápověda"><ChatIcon /></HelpButton>
      </Header>

      <Main>
        <Content>
          <PageTitle>2. Přidejte obsah do svého QR kódu</PageTitle>

          <Card $bottom={24}>
            <Head rule icon={<DesignIcon />} title="Design" note="Vyberte si pro svou webovou stránku barevné téma." />
            <Caption $top={15}>Barevná paleta</Caption>
            <PalettePanel>
              <Swatches>
                {palette.map((p, i) => <Swatch key={p} type="button" $color={p} $on={i === 5} aria-label={p} />)}
              </Swatches>
              <Caption>Základní barva</Caption>
              <ColorButton type="button"><ColorChip><PenIcon /></ColorChip><ColorCode>#EDC472</ColorCode></ColorButton>
            </PalettePanel>
          </Card>

          <Card $bottom={47}>
            <Head icon={<InfoIcon />} title="Informace o restauraci" note="Představte svou restauraci několika slovy." />
            <ImageBlock>
              <ImageLabel>Obrázek <HelpDot type="button">?</HelpDot></ImageLabel>
              <Picture />
            </ImageBlock>
            <Field id="restaurant" label="Název restaurace" value="Smith, Medina and Conrad" soft gap={23} />
            <FieldBox $soft $gap={23}>
              <Label htmlFor="about">Popis</Label>
              <AreaWrap>
                <Area id="about" defaultValue="Recent special buy across dinner work. Figure increase during choose ready full store collection. Fund candidate green level inside military here." />
                <Counter>0 / 4000</Counter>
              </AreaWrap>
            </FieldBox>
          </Card>

          <Card $bottom={28}>
            <Head flush icon={<MenuIcon />} title={<>Jídelní lístek<Star $big>*</Star></>} note="Uveďte informace o svém menu." />
            <MenuBody>
              <SectionRow>
                <FoldButton type="button" aria-label="Sbalit sekci"><DownIcon size={16} color={c.ink} w={2.5} /></FoldButton>
                <RowTitle>left</RowTitle>
                <SquareButton type="button" $tone="red" aria-label="Smazat sekci"><TrashIcon size={18} color={c.red} w={1.8} /></SquareButton>
                <Row $gap={5}>
                  <SquareButton type="button" $tone="green" aria-label="Nahoru"><UpIcon size={20} color="#95dfaa" w={1.8} /></SquareButton>
                  <SquareButton type="button" $tone="green" aria-label="Dolů"><DownIcon size={20} color="#95dfaa" w={1.8} /></SquareButton>
                </Row>
              </SectionRow>
              <SectionFields>
                <Field id="section-name" label="Název sekce" value="left" required />
                <Field id="section-note" label="Popis" value="Call throughout prevent exactly common thank. Same against a." gap={25} />
              </SectionFields>
              <Product>
                <Row>
                  <FoldButton type="button" $white aria-label="Sbalit produkt"><DownIcon size={16} color={c.ink} w={2.5} /></FoldButton>
                  <RowTitle>heavy</RowTitle>
                  <ProductTools>
                    <button type="button" aria-label="Nahoru"><UpIcon size={18} color="#95dfaa" w={1.8} /></button>
                    <Bar />
                    <button type="button" aria-label="Dolů"><DownIcon size={18} color="#95dfaa" w={1.8} /></button>
                    <Bar />
                    <button type="button" aria-label="Smazat produkt"><TrashIcon size={17} color={c.red} w={1.8} /></button>
                  </ProductTools>
                </Row>
                <ProductBody>
                  <ImageLabel>Obrázek <HelpDot type="button">?</HelpDot></ImageLabel>
                  <Picture dashed />
                  <TwoCols>
                    <Field id="product-name" label="Název" value="heavy" required />
                    <Field id="product-alt" label="Přeložený název (volitelné)" value="threat" />
                  </TwoCols>
                  <Field id="product-note" label="Popis" value="Forward talk partner yard attack evidence. Piece compare through its American follow respond" gap={24} />
                  <Field id="product-price" label="Cena (volitelné)" value="50" gap={25} />
                  <AllergenTitle>Alergeny</AllergenTitle>
                  <Allergens>
                    {allergens.map((a) => (
                      <AllergenTile key={a.name} type="button" $on={a.on} aria-label={a.name}><AllergenIcon color={a.color} art={a.art} /></AllergenTile>
                    ))}
                  </Allergens>
                </ProductBody>
              </Product>
              <WideButton type="button" $inset={15}><BoxPlusIcon />Přidat produkt</WideButton>
            </MenuBody>
            <Rule />
            <WideButton type="button" $inset={19}><BoxPlusIcon />Přidat sekci</WideButton>
          </Card>

          <Card $bottom={15}>
            <Head rule icon={<ClockIcon />} title="Otevírací doba" note="Provozní doba pro každý den v týdnu." />
            <Days>
              {days.map((d, i) => (
                <Day key={d}>
                  <DayLabel><Check type="checkbox" />{d}</DayLabel>
                  <Time label={`${d} od`} value={i ? '12:30' : '08:00'} set={!i} />
                  <Time label={`${d} do`} value={i ? '12:30' : '09:00'} set={!i} />
                  <SquareButton type="button" $tone="grey" $w={47} $h={42} aria-label={`Přidat čas, ${d}`}><PlusIcon size={17} color="#85858d" w={2.2} /></SquareButton>
                </Day>
              ))}
            </Days>
          </Card>

          <Card $bottom={38}>
            <Head rule icon={<InfoIcon />} title="Kontaktní údaje" note="Uveďte kontaktní údaje." />
            <Panels>
              <Panel>
                <PanelHead>Přidat telefon<AddButton type="button" aria-label="Přidat telefon"><PlusIcon size={18} color="#fff" w={1.8} /></AddButton></PanelHead>
                <PhoneForm>
                  <SmallLabel htmlFor="tag">Štítek (volitelný)</SmallLabel>
                  <SplitLabels>
                    <SmallLabel htmlFor="pick">Ikona</SmallLabel>
                    <SmallLabel htmlFor="tel">Telefonní číslo</SmallLabel>
                  </SplitLabels>
                  <Input id="tag" defaultValue="suggest" />
                  <PhoneBox>
                    <IconPick id="pick" type="button"><PhoneIcon size={21} color="#555a66" /><DownIcon size={12} color="#555a66" w={2} /></IconPick>
                    <PhoneInput id="tel" type="tel" defaultValue="5834464996" />
                  </PhoneBox>
                  <SquareButton type="button" $tone="red" $w={42} $h={42} aria-label="Smazat telefon"><TrashIcon size={19} color={c.red} w={1.8} /></SquareButton>
                </PhoneForm>
              </Panel>
              {['Přidat e-mail', 'Přidat webové stránky'].map((t) => (
                <Panel key={t}>
                  <PanelHead>{t}<AddButton type="button" aria-label={t}><PlusIcon size={18} color="#fff" w={1.8} /></AddButton></PanelHead>
                </Panel>
              ))}
            </Panels>
          </Card>

          <Card $bottom={25}>
            <Head rule icon={<GlobeIcon />} title="Sociální sítě" note="Přidejte si na svou stránku odkazy na sociální sítě." />
            <SocialPanel>
              {socials.map(([name, bg, art, ring]) => (
                <SocialTile key={name} type="button" aria-label={name}>
                  {bg ? <Badge $bg={bg} $ring={ring}>{art}</Badge> : art}
                </SocialTile>
              ))}
            </SocialPanel>
          </Card>

          <Card><Head closed icon={<FontIcon />} title="Písmo" note="Vytvořte si jedinečnou stránku pomocí originálních fontů." /></Card>
          <Card><Head closed icon={<SmileIcon />} title="Úvodní obrazovka" note="Zobrazení obrázku během načítání stránky." /></Card>
          <Card><Head closed icon={<QrIcon />} title="Název QR kódu" note="Pojmenujte svůj QR kód." /></Card>
          <Card><Head closed icon={<LockIcon />} title={<>Heslo <HelpDot type="button">?</HelpDot></>} /></Card>
        </Content>

        <Preview>
          <Toggle>
            <ToggleButton type="button" $on>Náhled</ToggleButton>
            <ToggleButton type="button">QR kód</ToggleButton>
          </Toggle>
          <Phone>
            <SideKey $side="left" $top={90} $h={19} />
            <SideKey $side="left" $top={125} $h={35} />
            <SideKey $side="left" $top={171} $h={36} />
            <SideKey $side="right" $top={150} $h={54} />
            <Screen>
              <Hero>Recent special buy across dinner work. Figure increase during choose ready full store collection. Fund candidate green level inside military here.</Hero>
              <Status>
                9:41
                <svg width="34" height="8" viewBox="0 0 34 8"><path d="M0 7V5h2v2zM3 7V4h2v3zM6 7V2.5h2V7zM9 7V1h2v6zM13 3c2-2.5 6-2.5 8 0l-4 4.5z" /><rect x="23" y="1.5" width="11" height="5.5" rx="1.5" /></svg>
              </Status>
              <Island />
              <PhoneCards>
                <PhoneCard $h={60} $pad="0 14px 0 12px"><PhoneLink href="#">left<ArrowRight size={17} w={1.4} /></PhoneLink></PhoneCard>
                <PhoneCard $h={76} $pad="19px"><AllergenIcon size={29} color="#fdc500" art={<BeanArt />} /></PhoneCard>
                <PhoneCard $h={170} $pad="17px 12px">
                  <ContactHead><IconPlate><GridIcon size={22} /></IconPlate>Kontakt</ContactHead>
                  <ContactRow>
                    <IconPlate $round><PhoneIcon size={17} /></IconPlate>
                    <ContactText><ContactTag>suggest</ContactTag>5834464996</ContactText>
                  </ContactRow>
                </PhoneCard>
              </PhoneCards>
              <HomeBar />
            </Screen>
          </Phone>
        </Preview>
      </Main>

      <ActionBar>
        <ActionInner>
          <ActionButton type="button"><ArrowLeft size={20} color={c.green} />Zpět</ActionButton>
          <ActionButton type="button" $solid>Další<ArrowRight size={20} color="#fff" /></ActionButton>
        </ActionInner>
      </ActionBar>
    </Page>
  );
}
